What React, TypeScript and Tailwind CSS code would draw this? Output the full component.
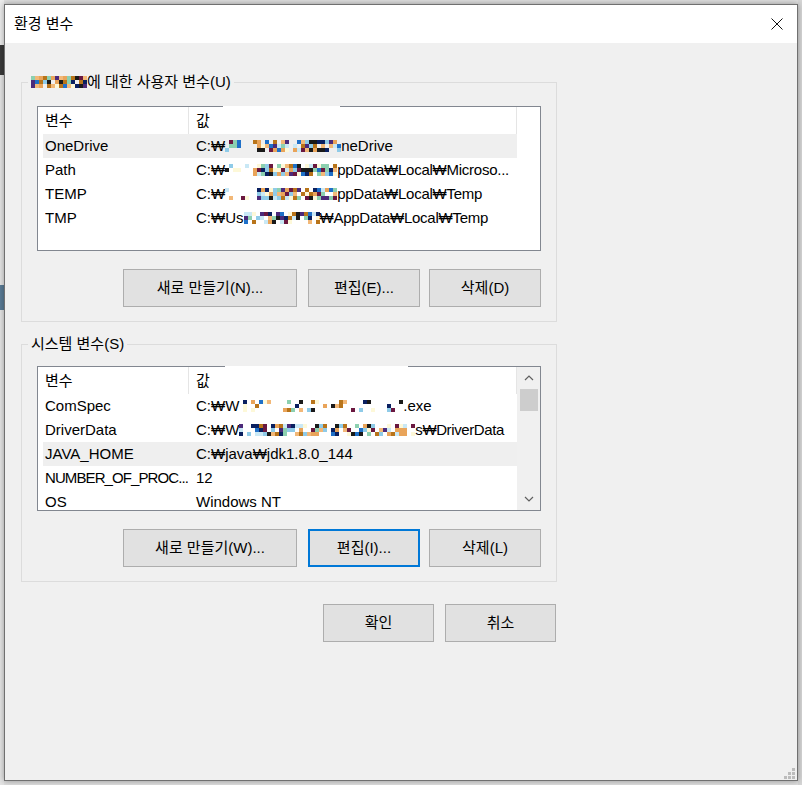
import React from 'react';

// 모자이크 처리된 부분 (픽셀 블록)
const PALETTE = ['#4b2a7a', '#6a1840', '#e9a45a', '#1f70c8', '#8fcbe8', '#b8741a', '#0a2060', '#f2b878', '#1a1a1a', '#8cd0b0', '#fdf8d8', '#c9e8f5'];

const Pixels: React.FC<{ seed: number; cols: number; rows?: number; density?: number }> = ({ seed, cols, rows = 3, density = 0.8 }) => {
  let s = seed;
  const rnd = () => {
    s = (s * 9301 + 49297) % 233280;
    return s / 233280;
  };
  const rects: React.ReactNode[] = [];
  for (let r = 0; r < rows; r++) {
    for (let c = 0; c < cols; c++) {
      const on = rnd() < density;
      const color = PALETTE[Math.floor(rnd() * PALETTE.length)];
      if (on) rects.push(<rect key={`${r}-${c}`} x={c * 4} y={r * 4} width={4} height={4} fill={color} />);
    }
  }
  return (
    <svg width={cols * 4} height={rows * 4} className="shrink-0" shapeRendering="crispEdges">
      {rects}
    </svg>
  );
};

type Row = { name: React.ReactNode; value: React.ReactNode };

const Chevron: React.FC<{ up?: boolean }> = ({ up }) => (
  <svg width="10" height="6" viewBox="0 0 10 6">
    <polyline
      points={up ? '1,5 5,1 9,5' : '1,1 5,5 9,1'}
      fill="none"
      stroke="#606060"
      strokeWidth="1.2"
    />
  </svg>
);

const ListView: React.FC<{ rows: Row[]; highlight: number; scroll?: boolean; patchLeft: number; patchWidth: number }> = ({
  rows,
  highlight,
  scroll,
  patchLeft,
  patchWidth,
}) => (
  <div className="relative h-[145px] border border-[#828790] bg-white flex">
    <div className="flex-1 min-w-0 flex flex-col overflow-hidden">
      {/* 헤더 */}
      <div className="flex h-[27px] shrink-0 w-[479px] border-r border-[#e5e5e5]">
        <div className="w-[151px] pl-[7px] flex items-center border-r border-[#e5e5e5]">변수</div>
        <div className="flex-1 pl-[7px] flex items-center">값</div>
      </div>
      {rows.map((row, idx) => (
        <div
          key={idx}
          className={`flex h-[24px] shrink-0 ml-[5px] w-[474px] items-center ${idx === highlight ? 'bg-[#efefef]' : ''}`}
        >
          <div className="w-[145px] pl-[2px] whitespace-nowrap overflow-hidden">{row.name}</div>
          <div className="flex-1 pl-[8px] flex items-center whitespace-nowrap overflow-hidden">{row.value}</div>
        </div>
      ))}
    </div>
    {scroll && (
      <div className="w-[23px] bg-[#f0f0f0] flex flex-col">
        <div className="h-[22px] flex items-center justify-center">
          <Chevron up />
        </div>
        <div className="h-[22px] ml-[3px] mr-[2px] bg-[#cdcdcd]"></div>
        <div className="flex-1"></div>
        <div className="h-[22px] flex items-center justify-center">
          <Chevron />
        </div>
      </div>
    )}
    {/* 모자이크 흔적 */}
    <span className="absolute top-[-1px] h-[1px] bg-white" style={{ left: patchLeft, width: patchWidth }}></span>
  </div>
);

const Btn: React.FC<{ w: string; focus?: boolean; children: React.ReactNode }> = ({ w, focus, children }) => (
  <button
    className={`h-[38px] ${w} bg-[#e1e1e1] text-[15px] leading-[20px] text-black ${
      focus ? 'border-2 border-[#0078d7]' : 'border border-[#adadad]'
    }`}
  >
    {children}
  </button>
);

const userRows: Row[] = [
  {
    name: 'OneDrive',
    value: (
      <>
        <span>C:₩</span>
        <Pixels seed={11} cols={8} density={0.3} />
        <Pixels seed={3} cols={21} density={0.85} />
        <span>neDrive</span>
      </>
    ),
  },
  {
    name: 'Path',
    value: (
      <>
        <span>C:₩</span>
        <Pixels seed={17} cols={8} density={0.3} />
        <Pixels seed={5} cols={20} density={0.85} />
        <span className="tracking-[-0.25px]">ppData₩Local₩Microso...</span>
      </>
    ),
  },
  {
    name: 'TEMP',
    value: (
      <>
        <span>C:₩</span>
        <Pixels seed={23} cols={8} density={0.3} />
        <Pixels seed={7} cols={20} density={0.85} />
        <span className="tracking-[-0.25px]">ppData₩Local₩Temp</span>
      </>
    ),
  },
  {
    name: 'TMP',
    value: (
      <>
        <span>C:₩Us</span>
        <Pixels seed={29} cols={19} density={0.7} />
        <span className="tracking-[-0.25px]">₩AppData₩Local₩Temp</span>
      </>
    ),
  },
];

const sysRows: Row[] = [
  {
    name: 'ComSpec',
    value: (
      <>
        <span>C:₩W</span>
        <Pixels seed={41} cols={41} density={0.35} />
        <span>.exe</span>
      </>
    ),
  },
  {
    name: 'DriverData',
    value: (
      <>
        <span>C:₩W</span>
        <Pixels seed={53} cols={44} density={0.6} />
        <span className="tracking-[-0.4px]">s₩DriverData</span>
      </>
    ),
  },
  { name: 'JAVA_HOME', value: <span>C:₩java₩jdk1.8.0_144</span> },
  { name: <span className="tracking-[-0.9px]">NUMBER_OF_PROC...</span>, value: <span>12</span> },
  { name: 'OS', value: <span>Windows NT</span> },
];

export default function App() {
  return (
    <div className="w-[802px] h-[785px] bg-[#dedede] flex text-[15px] leading-[20px] text-black font-['Liberation_Sans','Noto_Sans_CJK_KR',sans-serif] overflow-hidden">
      {/* 뒤쪽 창 */}
      <div className="w-[4px] flex flex-col shrink-0">
        <div className="h-[45px] bg-[#ececec]"></div>
        <div className="h-[30px] bg-[#3a3a3a]"></div>
        <div className="h-[210px] bg-[#e4e4e4]"></div>
        <div className="h-[25px] bg-[#5a7c96]"></div>
        <div className="flex-1 bg-[#e4e4e4]"></div>
      </div>

      {/* 대화상자 */}
      <div className="relative mt-[4px] w-[794px] h-[777px] border border-[#707070] bg-[#f0f0f0] flex flex-col shadow-[0_0_6px_rgba(0,0,0,0.35)]">
        {/* 제목 표시줄 */}
        <div className="h-[38px] bg-white flex items-center justify-between pl-[9px] pr-[14px] shrink-0">
          <span>환경 변수</span>
          <svg width="12" height="12" viewBox="0 0 12 12">
            <path d="M0.5 0.5 L11.5 11.5 M11.5 0.5 L0.5 11.5" stroke="#111" strokeWidth="1" />
          </svg>
        </div>

        {/* 사용자 변수 */}
        <fieldset className="ml-[16px] mt-[29px] w-[536px] border border-[#dcdcdc] px-[15px] pb-[14px]">
          <legend className="ml-[-9px] px-[3px]">
            <span className="inline-flex items-center h-[20px]">
              <Pixels seed={97} cols={14} density={0.9} />
              <span>에 대한 사용자 변수(U)</span>
            </span>
          </legend>
          <div className="mt-[13px]">
            <ListView rows={userRows} highlight={0} patchLeft={185} patchWidth={117} />
          </div>
          <div className="mt-[18px] flex justify-end">
            <Btn w="w-[174px]">새로 만들기(N)...</Btn>
            <div className="ml-[11px]">
              <Btn w="w-[112px]">편집(E)...</Btn>
            </div>
            <div className="ml-[9px]">
              <Btn w="w-[112px]">삭제(D)</Btn>
            </div>
          </div>
        </fieldset>

        {/* 시스템 변수 */}
        <fieldset className="ml-[16px] mt-[12px] w-[536px] border border-[#dcdcdc] px-[15px] pb-[14px]">
          <legend className="ml-[-9px] px-[3px]">
            <span className="inline-flex items-center h-[20px]">시스템 변수(S)</span>
          </legend>
          <div className="mt-[12px]">
            <ListView rows={sysRows} highlight={2} scroll patchLeft={187} patchWidth={183} />
          </div>
          <div className="mt-[18px] flex justify-end">
            <Btn w="w-[174px]">새로 만들기(W)...</Btn>
            <div className="ml-[11px]">
              <Btn w="w-[112px]" focus>
                편집(I)...
              </Btn>
            </div>
            <div className="ml-[9px]">
              <Btn w="w-[112px]">삭제(L)</Btn>
            </div>
          </div>
        </fieldset>

        {/* 확인 / 취소 */}
        <div className="ml-[16px] mt-[22px] w-[536px] flex justify-end gap-[11px] pr-[1px]">
          <Btn w="w-[111px]">확인</Btn>
          <Btn w="w-[111px]">취소</Btn>
        </div>

        {/* 크기 조정 그립 */}
        <div className="absolute right-[2px] bottom-[1px] grid grid-cols-3 gap-[1px]">
          <span className="w-[3px] h-[3px]"></span>
          <span className="w-[3px] h-[3px]"></span>
          <span className="w-[3px] h-[3px] bg-[#bcbcbc]"></span>
          <span className="w-[3px] h-[3px]"></span>
          <span className="w-[3px] h-[3px] bg-[#bcbcbc]"></span>
          <span className="w-[3px] h-[3px] bg-[#bcbcbc]"></span>
          <span className="w-[3px] h-[3px] bg-[#bcbcbc]"></span>
          <span className="w-[3px] h-[3px] bg-[#bcbcbc]"></span>
          <span className="w-[3px] h-[3px] bg-[#bcbcbc]"></span>
        </div>
      </div>

      <div className="flex-1 bg-[#d6d6d6]"></div>
    </div>
  );
}
